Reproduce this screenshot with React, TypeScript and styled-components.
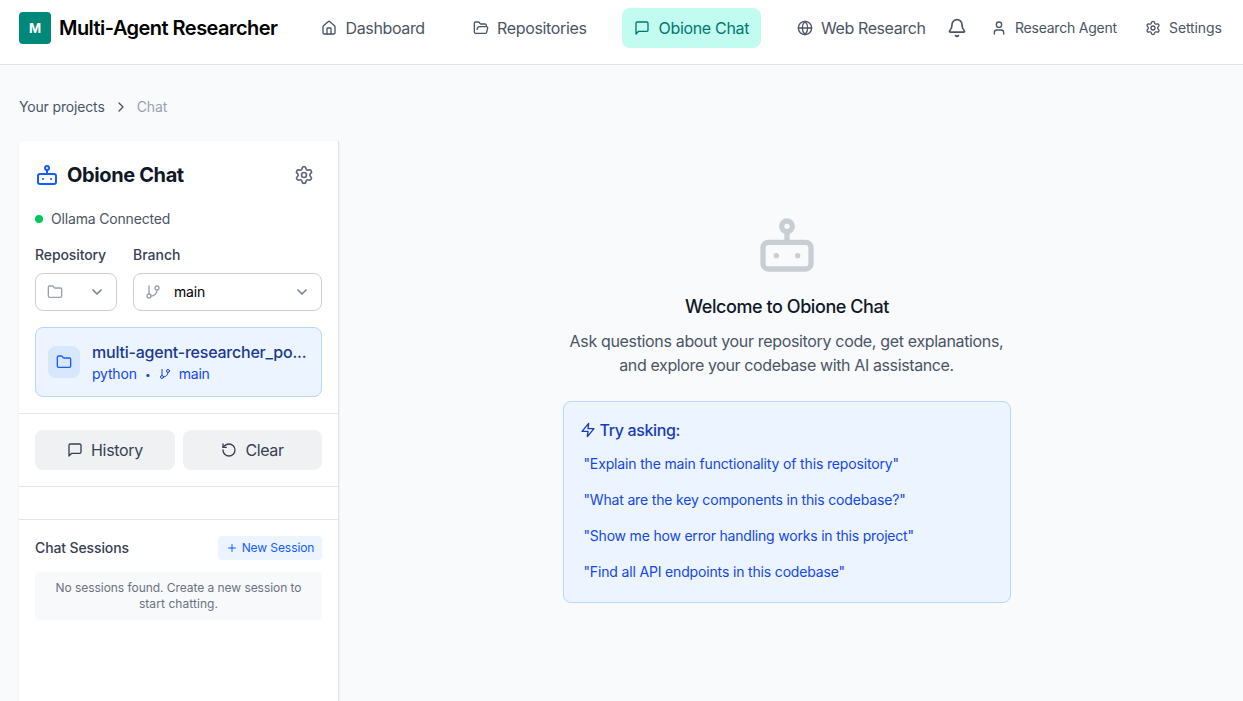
import React from "react";
import styled, { createGlobalStyle } from "styled-components";
import {
  Bell,
  ChevronDown,
  ChevronRight,
  Folder,
  FolderOpen,
  GitBranch,
  Globe,
  House,
  Plus,
  RotateCcw,
  Settings,
  User,
} from "lucide-react";

const GlobalStyle = createGlobalStyle`
  *, *::before, *::after { box-sizing: border-box; }
  body {
    margin: 0;
    background: #f8fafc;
    font-family: Inter, "Liberation Sans", sans-serif;
    font-size: 16px;
    line-height: 24px;
    overflow: hidden;
  }
  svg { display: block; flex: none; }
  h1, h2, h3, p { margin: 0; }
  button { font: inherit; border: 0; background: none; padding: 0; margin: 0; }
`;

const Text = styled.span<{ $ls?: number }>`
  white-space: nowrap;
  letter-spacing: ${(p) => p.$ls ?? 0}px;
`;

const Page = styled.div`
  height: 701px;
  display: flex;
  flex-direction: column;
  overflow: hidden;
`;

const Header = styled.header`
  height: 65px;
  flex: none;
  display: flex;
  align-items: flex-start;
  padding: 8px 0 0 19px;
  background: #fff;
  border-bottom: 1px solid #dfe3ea;
`;

const Brand = styled.div`
  width: 290px;
  height: 40px;
  display: flex;
  align-items: center;
  gap: 8px;
  color: #000;
  font-size: 20px;
  font-weight: 600;
`;

const Logo = styled.div`
  width: 32px;
  height: 32px;
  border-radius: 4px;
  background: #00897b;
  color: #fff;
  font-size: 13px;
  font-weight: 700;
  display: flex;
  align-items: center;
  justify-content: center;
`;

const NavItem = styled.a<{ $width: number; $gap?: number; $active?: boolean }>`
  width: ${(p) => p.$width}px;
  height: 40px;
  margin-right: 24px;
  padding-left: 12px;
  display: flex;
  align-items: center;
  gap: ${(p) => p.$gap ?? 8.5}px;
  border-radius: 8px;
  color: ${(p) => (p.$active ? "#00786f" : "#4a5565")};
  background: ${(p) => (p.$active ? "#c2fbef" : "transparent")};
`;

const HeaderTool = styled.a<{ $width: number }>`
  width: ${(p) => p.$width}px;
  height: 40px;
  display: flex;
  align-items: center;
  gap: 8px;
  font-size: 14px;
  color: #4a5565;
`;

const Crumbs = styled.nav`
  height: 76px;
  flex: none;
  display: flex;
  align-items: center;
  padding: 8px 0 0 19px;
  gap: 8px;
  font-size: 14px;
  color: #4a5565;
`;

const Muted = styled.span`
  color: #99a1af;
`;

const Workspace = styled.div`
  flex: 1;
  min-height: 0;
  display: flex;
  padding: 0 8px 0 19px;
`;

const Sidebar = styled.aside`
  width: 320px;
  flex: none;
  background: #fff;
  border-right: 1px solid #dfe3e8;
  box-shadow: 0 1px 2px rgba(0, 0, 0, 0.08);
`;

const Section = styled.section<{ $height?: number }>`
  height: ${(p) => (p.$height ? `${p.$height}px` : "auto")};
  padding: 16px;
  border-bottom: 1px solid #e2e5ea;
`;

const TitleRow = styled.div`
  height: 36px;
  display: flex;
  align-items: center;
  padding-right: 8px;
  justify-content: space-between;
  color: #5f6877;
`;

const Title = styled.h1`
  display: flex;
  align-items: center;
  gap: 8px;
  font-size: 20px;
  line-height: 28px;
  font-weight: 700;
  color: #101828;
`;

const Status = styled.div`
  margin-top: 16px;
  height: 20px;
  display: flex;
  align-items: center;
  gap: 8px;
  font-size: 14px;
  color: #4a5565;
`;

const Dot = styled.i`
  width: 8px;
  height: 8px;
  border-radius: 50%;
  background: #00c758;
`;

const Fields = styled.div`
  margin-top: 16px;
  display: grid;
  grid-template-columns: 82px 189px;
  gap: 16px;
`;

const Label = styled.div`
  height: 20px;
  margin-bottom: 8px;
  line-height: 20px;
  font-size: 14px;
  font-weight: 500;
  color: #364153;
`;

const Select = styled.div`
  height: 38px;
  border: 1px solid #cbced6;
  border-radius: 8px;
  padding: 0 11px;
  display: flex;
  align-items: center;
  gap: 13px;
  font-size: 14px;
  color: #99a1af;

  svg:last-child {
    color: #7d8593;
    stroke-width: 2.6px;
  }
`;

const SelectValue = styled.span`
  flex: 1;
  color: #000;
`;

const RepoCard = styled.div`
  margin-top: 16px;
  height: 70px;
  border: 1px solid #b5d8fb;
  border-radius: 8px;
  background: #ebf4ff;
  padding: 0 12px;
  display: flex;
  align-items: center;
  gap: 12px;
`;

const RepoIcon = styled.div`
  width: 32px;
  height: 32px;
  flex: none;
  border-radius: 8px;
  background: #d7e8fe;
  color: #155dfc;
  display: flex;
  align-items: center;
  justify-content: center;
`;

const RepoName = styled.div`
  font-weight: 500;
  color: #1c398e;
`;

const RepoMeta = styled.div`
  height: 20px;
  display: flex;
  align-items: center;
  gap: 8px;
  font-size: 14px;
  line-height: 20px;
  color: #1447e6;
`;

const Bullet = styled.span`
  width: 6px;
  text-align: center;
  font-size: 10px;
  line-height: 18px;
  padding-bottom: 1px;
`;

const Actions = styled.div`
  display: grid;
  grid-template-columns: 140px 139px;
  gap: 8px;
`;

const ActionButton = styled.button`
  height: 40px;
  border-radius: 8px;
  background: #f0f1f3;
  color: #364153;
  display: flex;
  align-items: center;
  justify-content: center;
  gap: 8px;
`;

const Sessions = styled.section`
  padding: 16px;
`;

const SessionsHead = styled.div`
  height: 24px;
  display: flex;
  align-items: center;
  justify-content: space-between;
  font-size: 14px;
  font-weight: 500;
  color: #364153;
`;

const NewSession = styled.button`
  width: 104px;
  height: 24px;
  border-radius: 4px;
  background: #ebf4ff;
  color: #155dfc;
  font-size: 12px;
  font-weight: 400;
  display: flex;
  align-items: center;
  justify-content: center;
  gap: 4px;
`;

const Empty = styled.div`
  margin-top: 12px;
  height: 48px;
  border-radius: 4px;
  background: #f8f9fb;
  display: flex;
  flex-direction: column;
  align-items: center;
  justify-content: center;
  font-size: 12px;
  line-height: 16px;
  color: #6a7282;
`;

const Chat = styled.main`
  flex: 1;
  display: flex;
  flex-direction: column;
  align-items: center;
  padding-top: 72px;
`;

const Welcome = styled.h2`
  margin-top: 16px;
  font-size: 18px;
  line-height: 28px;
  font-weight: 500;
  color: #101828;
`;

const Lead = styled.p`
  margin-top: 8px;
  padding-right: 1px;
  display: flex;
  flex-direction: column;
  align-items: center;
  color: #4a5565;
`;

const Prompts = styled.section`
  width: 448px;
  height: 202px;
  margin-top: 24px;
  border: 1px solid #b5d8fb;
  border-radius: 8px;
  background: #ebf4ff;
  padding: 16px;
`;

const PromptsTitle = styled.h3`
  height: 24px;
  display: flex;
  align-items: center;
  gap: 3.5px;
  font-size: 16px;
  font-weight: 500;
  color: #193cb8;
`;

const Prompt = styled.button`
  height: 28px;
  margin-top: 8px;
  padding-left: 3.5px;
  display: flex;
  align-items: center;
  font-size: 14px;
  color: #1447e6;
`;

function MessageIcon() {
  return (
    <svg width="16" height="16" viewBox="0 0 24 24" fill="none" stroke="currentColor" strokeWidth="2" strokeLinecap="round" strokeLinejoin="round">
      <path d="M21 15a2 2 0 0 1-2 2H7l-4 4V5a2 2 0 0 1 2-2h14a2 2 0 0 1 2 2z" />
    </svg>
  );
}

function BoltIcon() {
  return (
    <svg width="16" height="16" viewBox="0 0 24 24" fill="none" stroke="currentColor" strokeWidth="2" strokeLinecap="round" strokeLinejoin="round">
      <path d="M13 2 3 14h9l-1 8 10-12h-9l1-8z" />
    </svg>
  );
}

function BotIcon({ size, color }: { size: number; color: string }) {
  return (
    <svg width={size} height={size} viewBox="0 0 24 24" fill="none" stroke={color} strokeWidth="2" strokeLinecap="round" strokeLinejoin="round">
      <rect x="3" y="11" width="18" height="10" rx="2" />
      <circle cx="12" cy="5" r="2" />
      <path d="M12 7v4M8 16h.01M16 16h.01" />
    </svg>
  );
}

const prompts: { text: string; ls: number }[] = [
  { text: '"Explain the main functionality of this repository"', ls: -0.15 },
  { text: '"What are the key components in this codebase?"', ls: -0.175 },
  { text: '"Show me how error handling works in this project"', ls: -0.2 },
  { text: '"Find all API endpoints in this codebase"', ls: -0.16 },
];

export default function App() {
  return (
    <Page>
      <GlobalStyle />
      <Header>
        <Brand>
          <Logo>M</Logo>
          <Text $ls={-0.54}>Multi-Agent Researcher</Text>
        </Brand>
        <NavItem $width={128}><House size={16} /><Text $ls={-0.36}>Dashboard</Text></NavItem>
        <NavItem $width={137} $gap={8}><FolderOpen size={16} /><Text $ls={-0.34}>Repositories</Text></NavItem>
        <NavItem $width={139} $active><MessageIcon /><Text $ls={-0.32}>Obione Chat</Text></NavItem>
        <NavItem $width={138} $gap={8}><Globe size={16} /><Text $ls={-0.4}>Web Research</Text></NavItem>
        <HeaderTool $width={44}><Bell size={20} /></HeaderTool>
        <HeaderTool $width={154}><User size={16} /><Text $ls={-0.23}>Research Agent</Text></HeaderTool>
        <HeaderTool $width={90}><Settings size={16} /><Text $ls={-0.1}>Settings</Text></HeaderTool>
      </Header>
      <Crumbs>
        <Text $ls={-0.16}>Your projects</Text>
        <ChevronRight size={16} />
        <Muted><Text $ls={-0.1}>Chat</Text></Muted>
      </Crumbs>
      <Workspace>
        <Sidebar>
          <Section $height={273}>
            <TitleRow>
              <Title><BotIcon size={24} color="#155dfc" /><Text $ls={-0.38}>Obione Chat</Text></Title>
              <Settings size={20} strokeWidth={2} />
            </TitleRow>
            <Status><Dot /><Text $ls={-0.17}>Ollama Connected</Text></Status>
            <Fields>
              <div>
                <Label><Text $ls={-0.1}>Repository</Text></Label>
                <Select><Folder size={16} /><SelectValue /><ChevronDown size={16} /></Select>
              </div>
              <div>
                <Label><Text>Branch</Text></Label>
                <Select><GitBranch size={16} /><SelectValue><Text $ls={-0.2}>main</Text></SelectValue><ChevronDown size={16} /></Select>
              </div>
            </Fields>
            <RepoCard>
              <RepoIcon><Folder size={16} /></RepoIcon>
              <div>
                <RepoName><Text $ls={-0.22}>multi-agent-researcher_po...</Text></RepoName>
                <RepoMeta><Text $ls={-0.2}>python</Text><Bullet>•</Bullet><GitBranch size={12} /><Text $ls={-0.2}>main</Text></RepoMeta>
              </div>
            </RepoCard>
          </Section>
          <Section $height={73}>
            <Actions>
              <ActionButton><MessageIcon /><Text $ls={-0.3}>History</Text></ActionButton>
              <ActionButton><RotateCcw size={16} /><Text $ls={-0.4}>Clear</Text></ActionButton>
            </Actions>
          </Section>
          <Section $height={33} />
          <Sessions>
            <SessionsHead>
              <Text $ls={-0.12}>Chat Sessions</Text>
              <NewSession><Plus size={12} /><Text $ls={-0.08}>New Session</Text></NewSession>
            </SessionsHead>
            <Empty>
              <Text $ls={-0.05}>No sessions found. Create a new session to</Text>
              <Text $ls={0.07}>start chatting.</Text>
            </Empty>
          </Sessions>
        </Sidebar>
        <Chat>
          <BotIcon size={64} color="#c9ced5" />
          <Welcome><Text $ls={-0.43}>Welcome to Obione Chat</Text></Welcome>
          <Lead>
            <Text $ls={-0.34}>Ask questions about your repository code, get explanations,</Text>
            <Text $ls={-0.38}>and explore your codebase with AI assistance.</Text>
          </Lead>
          <Prompts>
            <PromptsTitle><BoltIcon /><Text $ls={-0.36}>Try asking:</Text></PromptsTitle>
            {prompts.map((p) => (
              <Prompt key={p.text}><Text $ls={p.ls}>{p.text}</Text></Prompt>
            ))}
          </Prompts>
        </Chat>
      </Workspace>
    </Page>
  );
}
